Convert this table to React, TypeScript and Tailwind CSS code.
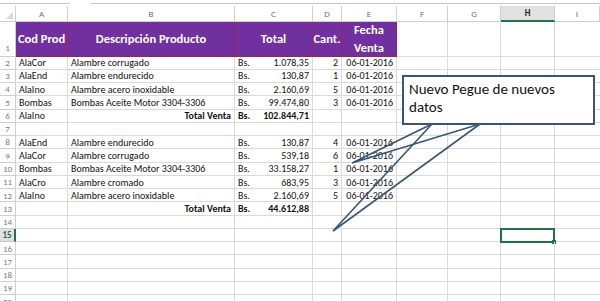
const W = ["w-[16px]", "w-[52px]", "w-[167px]", "w-[78px]", "w-[29px]", "w-[55px]", "w-[51px]", "w-[53px]", "w-[54px]"];
const LETTERS = ["A", "B", "C", "D", "E", "F", "G", "H", "I"];

type Row = {
  n: number;
  a?: string;
  b?: string;
  total?: boolean;
  amount?: string;
  qty?: string;
  date?: string;
};

const rows: Row[] = [
  { n: 2, a: "AlaCor", b: "Alambre corrugado", amount: "1.078,35", qty: "2", date: "06-01-2016" },
  { n: 3, a: "AlaEnd", b: "Alambre endurecido", amount: "130,87", qty: "1", date: "06-01-2016" },
  { n: 4, a: "AlaIno", b: "Alambre acero inoxidable", amount: "2.160,69", qty: "5", date: "06-01-2016" },
  { n: 5, a: "Bombas", b: "Bombas Aceite Motor 3304-3306", amount: "99.474,80", qty: "3", date: "06-01-2016" },
  { n: 6, a: "AlaIno", b: "Total Venta", total: true, amount: "102.844,71" },
  { n: 7 },
  { n: 8, a: "AlaEnd", b: "Alambre endurecido", amount: "130,87", qty: "4", date: "06-01-2016" },
  { n: 9, a: "AlaCor", b: "Alambre corrugado", amount: "539,18", qty: "6", date: "06-01-2016" },
  { n: 10, a: "Bombas", b: "Bombas Aceite Motor 3304-3306", amount: "33.158,27", qty: "1", date: "06-01-2016" },
  { n: 11, a: "AlaCro", b: "Alambre cromado", amount: "683,95", qty: "3", date: "06-01-2016" },
  { n: 12, a: "AlaIno", b: "Alambre acero inoxidable", amount: "2.160,69", qty: "5", date: "06-01-2016" },
  { n: 13, b: "Total Venta", total: true, amount: "44.612,88" },
  { n: 14 },
  { n: 15 },
  { n: 16 },
  { n: 17 },
  { n: 18 },
  { n: 19 },
  { n: 20 },
];

const cell = "shrink-0 h-full border-r border-b border-[#dadada] flex items-center overflow-hidden whitespace-nowrap";

function DataRow({ r }: { r: Row }) {
  const sel = r.n === 15;
  return (
    <div className="flex h-[13.27px]">
      <div
        className={`${W[0]} shrink-0 h-full flex items-center justify-center border-b text-[9px] ${
          sel
            ? "bg-[#e1e1e1] border-r-2 border-r-[#217346] border-b-[#c6c6c6] text-[#217346] font-bold"
            : "border-r border-[#cfcfcf] text-[#7a7a7a]"
        }`}
      >
        {r.n}
      </div>
      <div className={`${W[1]} ${cell} pl-[3px]`}>{r.a}</div>
      <div className={`${W[2]} ${cell} px-[3px] ${r.total ? "justify-end font-bold" : ""}`}>{r.b}</div>
      <div className={`${W[3]} ${cell} justify-between px-[3px] ${r.total ? "font-bold" : ""}`}>
        {r.amount && (
          <>
            <span>Bs.</span>
            <span>{r.amount}</span>
          </>
        )}
      </div>
      <div className={`${W[4]} ${cell} justify-end pr-[3px]`}>{r.qty}</div>
      <div className={`${W[5]} ${cell} justify-end pr-[3px]`}>{r.date}</div>
      <div className={`${W[6]} ${cell}`} />
      <div className={`${W[7]} ${cell}`} />
      <div className={`${W[8]} ${cell} relative overflow-visible`}>
        {sel && (
          <div className="absolute left-[-1px] top-[-1px] w-[55px] h-[15px] border-2 border-[#217346]">
            <div className="absolute right-[-3px] bottom-[-3px] w-[4px] h-[4px] bg-[#217346]" />
          </div>
        )}
      </div>
      <div className="flex-1 h-full border-b border-[#dadada]" />
    </div>
  );
}

const head = "shrink-0 h-full bg-[#7030a0] border-r border-b border-[#a31f55] text-white font-bold text-[12.5px] flex items-center justify-center text-center leading-[18px]";

export default function App() {
  return (
    <div
      className="relative w-[600px] h-[301px] overflow-hidden bg-white text-[10px] text-[#111]"
      style={{ fontFamily: "Carlito, Lato, 'Liberation Sans', sans-serif" }}
    >
      {/* formula bar remnants */}
      <div className="flex h-[6px]">
        <div className="w-[70px] h-[4px] border-b border-[#c8c8c8]" />
        <div className="w-[20px]" />
        <div className="flex-1 h-[4px] border-b border-[#c8c8c8]" />
      </div>

      {/* column letters */}
      <div className="flex h-[16px] text-[9px] text-[#6f6f6f]">
        <div className={`${W[0]} shrink-0 h-full border-r border-b border-[#cfcfcf] relative`}>
          <div className="absolute right-[2px] bottom-[2px] w-0 h-0 border-l-[7px] border-l-transparent border-b-[7px] border-b-[#d8d8d8]" />
        </div>
        {LETTERS.map((l, i) =>
          l === "H" ? (
            <div
              key={l}
              className={`${W[i + 1]} shrink-0 h-full bg-[#e1e1e1] border-r border-[#cfcfcf] border-b-2 border-b-[#217346] flex items-center justify-center font-bold text-[#262626]`}
            >
              {l}
            </div>
          ) : (
            <div
              key={l}
              className={`${i === 8 ? "flex-1" : W[i + 1]} shrink-0 h-full border-r border-b border-[#cfcfcf] flex items-center justify-center`}
            >
              {l}
            </div>
          )
        )}
      </div>

      {/* header row 1 */}
      <div className="flex h-[34.5px]">
        <div className={`${W[0]} shrink-0 h-full border-r border-b border-[#cfcfcf] flex items-end justify-center pb-[1px] text-[9px] text-[#7a7a7a]`}>
          1
        </div>
        <div className={`${W[1]} ${head}`}>Cod Prod</div>
        <div className={`${W[2]} ${head}`}>Descripción Producto</div>
        <div className={`${W[3]} ${head}`}>Total</div>
        <div className={`${W[4]} ${head}`}>Cant.</div>
        <div className={`${W[5]} ${head}`}>
          Fecha
          <br />
          Venta
        </div>
        <div className={`${W[6]} ${cell}`} />
        <div className={`${W[7]} ${cell}`} />
        <div className={`${W[8]} ${cell}`} />
        <div className="flex-1 h-full border-b border-[#dadada]" />
      </div>

      {rows.map((r) => (
        <DataRow key={r.n} r={r} />
      ))}

      {/* callout */}
      <svg className="absolute left-0 top-0" width="600" height="301" viewBox="0 0 600 301">
        <polyline points="432,124 352,163 480,124" fill="none" stroke="#3a5676" strokeWidth="1.6" strokeLinejoin="miter" />
        <polyline points="432,124 333,231 480,124" fill="none" stroke="#3a5676" strokeWidth="1.6" strokeLinejoin="miter" />
      </svg>
      <div className="absolute left-[402px] top-[75px] w-[193px] h-[50px] border-2 border-[#3a5676] bg-white pl-[5px] pt-[3px] text-[15px] leading-[18px] text-[#111]">
        Nuevo Pegue de nuevos
        <br />
        datos
      </div>
    </div>
  );
}
